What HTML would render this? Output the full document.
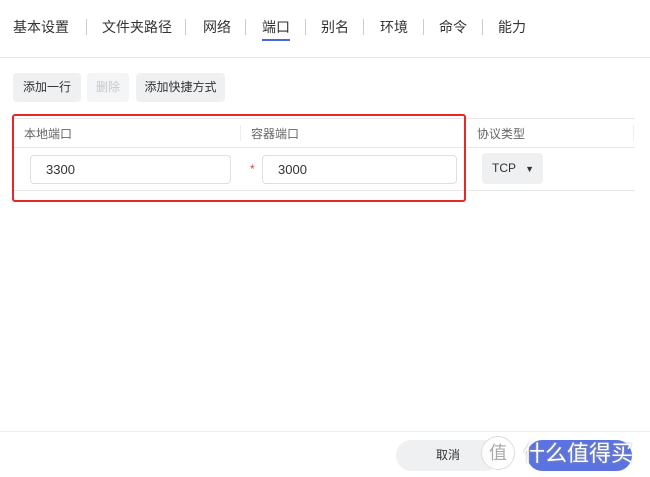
<html><head><style>
body{margin:0;width:650px;height:477px;background:#fff;font-family:"Liberation Sans","Noto Sans CJK SC",sans-serif;position:relative;overflow:hidden;color:#333}
.a{position:absolute}
.tab{position:absolute;top:17px;font-size:14px;color:#333}
.sep{position:absolute;top:19px;width:1px;height:16px;background:#ccc}
.btn{position:absolute;top:73px;height:29px;background:#eef0f2;border-radius:4px;font-size:12px;line-height:29px;text-align:center;color:#333}
.inp{position:absolute;top:155px;border:1px solid #dcdfe6;border-radius:4px;font-size:13px;line-height:27px;box-sizing:border-box;height:29px;padding-left:15px;color:#333}
</style></head><body>
<div class="tab" style="left:13px">基本设置</div><div class="sep" style="left:86px"></div>
<div class="tab" style="left:102px">文件夹路径</div><div class="sep" style="left:185px"></div>
<div class="tab" style="left:203px">网络</div><div class="sep" style="left:245px"></div>
<div class="tab" style="left:262px">端口</div><div class="sep" style="left:305px"></div>
<div class="tab" style="left:321px">别名</div><div class="sep" style="left:363px"></div>
<div class="tab" style="left:380px">环境</div><div class="sep" style="left:423px"></div>
<div class="tab" style="left:439px">命令</div><div class="sep" style="left:482px"></div>
<div class="tab" style="left:498px">能力</div>
<div class="a" style="left:262px;top:39px;width:28px;height:2px;background:#4a66d8"></div>
<div class="a" style="left:0;top:57px;width:650px;height:1px;background:#e6e6e6"></div>
<div class="btn" style="left:13px;width:68px">添加一行</div>
<div class="btn" style="left:87px;width:42px;color:#c8c8c8;background:#f4f5f6">删除</div>
<div class="btn" style="left:136px;width:89px">添加快捷方式</div>
<div class="a" style="left:13px;top:118px;width:622px;height:1px;background:#e8e8e8"></div>
<div class="a" style="left:13px;top:147px;width:622px;height:1px;background:#e8e8e8"></div>
<div class="a" style="left:13px;top:190px;width:622px;height:1px;background:#e8e8e8"></div>
<div class="a" style="left:240px;top:125px;width:1px;height:16px;background:#eee"></div>
<div class="a" style="left:633px;top:125px;width:1px;height:16px;background:#eee"></div>
<div class="a" style="left:24px;top:125px;font-size:12px;color:#666">本地端口</div>
<div class="a" style="left:251px;top:125px;font-size:12px;color:#666">容器端口</div>
<div class="a" style="left:477px;top:125px;font-size:12px;color:#666">协议类型</div>
<div class="inp" style="left:30px;width:201px">3300</div>
<div class="a" style="left:250px;top:162px;color:#e04040;font-size:12px">*</div>
<div class="inp" style="left:262px;width:195px">3000</div>
<div class="a" style="left:482px;top:153px;width:61px;height:31px;background:#eef0f2;border-radius:4px;font-size:12px;line-height:31px;padding-left:10px;box-sizing:border-box">TCP <span style="font-size:9px;margin-left:6px">▼</span></div>
<div class="a" style="left:12px;top:114px;width:450px;height:84px;border:2px solid #e62828;border-radius:3px"></div>
<div class="a" style="left:0;top:431px;width:650px;height:1px;background:#eee"></div>
<div class="a" style="left:396px;top:440px;width:104px;height:31px;background:#eef0f2;border-radius:16px;font-size:12px;line-height:31px;text-align:center">取消</div>
<div class="a" style="left:527px;top:440px;width:105px;height:31px;background:#5b73e0;border-radius:16px"></div>
<div class="a" style="left:481px;top:436px;width:32px;height:32px;border-radius:50%;background:rgba(255,255,255,.8);border:1px solid #ddd;font-size:18px;line-height:32px;text-align:center;color:#aaa">值</div>
<div class="a" style="left:523px;top:436px;font-size:22px;white-space:nowrap;color:#fff;text-shadow:0 0 2px #999">什么值得买</div>
</body></html>
